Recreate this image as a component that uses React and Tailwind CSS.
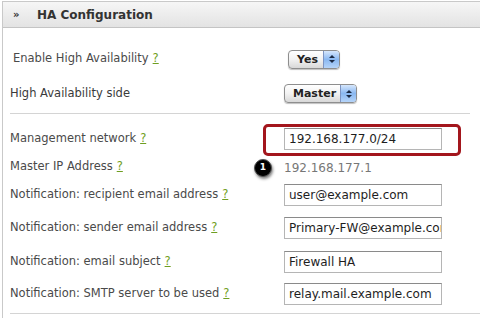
import React from "react";

const font = { fontFamily: '"DejaVu Sans", "Liberation Sans", sans-serif' };

function Help() {
  return <span className="ml-[4px] text-[#6f9e21] underline">?</span>;
}

function Select({ value, width }) {
  return (
    <div
      className="flex h-[19px] items-stretch rounded-[4px] border border-[#8e8e8e] bg-gradient-to-b from-white via-[#f2f2f2] to-[#d8d8d8] shadow-[0_1px_1px_rgba(0,0,0,0.25)] overflow-hidden"
      style={{ width }}
    >
      <span className="flex-1 pl-[8px] text-[11px] font-bold leading-[17px] text-[#222]">{value}</span>
      <span className="flex w-[16px] flex-col items-center justify-center gap-[2px] border-l border-[#7d94c2] bg-gradient-to-b from-[#d6e7fc] via-[#8ab8f1] to-[#b5d4f9]">
        <span className="h-0 w-0 border-x-[3px] border-b-[3px] border-x-transparent border-b-[#1b2a44]" />
        <span className="h-0 w-0 border-x-[3px] border-t-[3px] border-x-transparent border-t-[#1b2a44]" />
      </span>
    </div>
  );
}

function Field({ value }) {
  return (
    <div className="h-[22px] w-[158px] overflow-hidden whitespace-nowrap border border-[#b5b5b5] border-t-[#8a8a8a] bg-white pl-[4px] text-[12px] leading-[20px] text-[#1e1e1e]">
      {value}
    </div>
  );
}

function Row({ h, label, children }) {
  return (
    <div className="flex items-center" style={{ height: h }}>
      <div className="w-[274px] text-[11.5px] text-[#4a4a4a]">{label}</div>
      <div className="relative">{children}</div>
    </div>
  );
}

export default function App() {
  return (
    <div className="h-[318px] w-[480px] overflow-hidden bg-white pt-[1px] pl-[2px]" style={font}>
      <div className="h-[330px] border-l border-t border-[#c9c9c9]">
        <div className="flex h-[26px] items-center border-b border-[#c4c4c4] bg-gradient-to-b from-[#f6f6f6] to-[#e3e3e3] text-[12px] font-bold text-[#333]">
          <span className="ml-[10px] w-[24px] text-[10px]">»</span>
          <span>HA Configuration</span>
        </div>
        <div className="pl-[7px]">
          <div className="h-[14px]" />
          <Row h={34} label={<span className="pl-[3px]">Enable High Availability<Help /></span>}>
            <div className="ml-[4px]">
              <Select value="Yes" width={52} />
            </div>
          </Row>
          <Row h={35} label={<span className="text-[#3a3a3a]">High Availability side</span>}>
            <Select value="Master" width={73} />
          </Row>
          <div className="mt-[2px] h-px w-[460px] bg-[#d4d4d4]" />
          <div className="h-[9px]" />
          <Row h={32} label={<>Management network<Help /></>}>
            <Field value="192.168.177.0/24" />
            <div className="absolute left-[-21px] top-[-4px] h-[32px] w-[198px] rounded-[5px] border-[3px] border-[#a3161d]" />
          </Row>
          <Row h={24} label={<>Master IP Address<Help /></>}>
            <span className="text-[12px] text-[#777]">192.168.177.1</span>
            <div className="absolute left-[-30px] top-[4px] flex h-[18px] w-[18px] items-center justify-center rounded-full border border-[#555] bg-black text-[9px] font-bold text-white shadow-[1px_2px_3px_rgba(0,0,0,0.5)]">
              1
            </div>
          </Row>
          <Row h={32} label={<>Notification: recipient email address<Help /></>}>
            <Field value="user@example.com" />
          </Row>
          <Row h={34} label={<>Notification: sender email address<Help /></>}>
            <Field value="Primary-FW@example.com" />
          </Row>
          <Row h={33} label={<>Notification: email subject<Help /></>}>
            <Field value="Firewall HA" />
          </Row>
          <Row h={32} label={<>Notification: SMTP server to be used<Help /></>}>
            <Field value="relay.mail.example.com" />
          </Row>
          <div className="mt-[3px] h-px w-[470px] bg-[#d4d4d4]" />
        </div>
      </div>
    </div>
  );
}
